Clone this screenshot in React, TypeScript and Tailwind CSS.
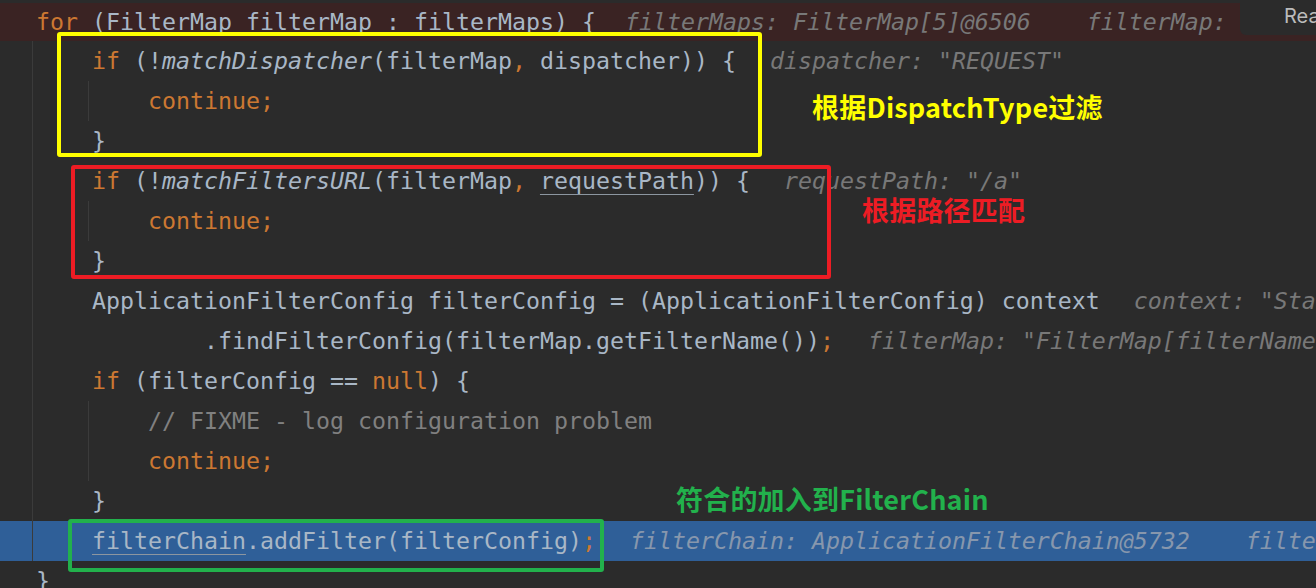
import React from "react";

// ─── Token helpers ───────────────────────────────────────────────────────────
const K = ({ children }: { children: React.ReactNode }) => (
  <span className="text-[#cc7832]">{children}</span>
);
const It = ({ children }: { children: React.ReactNode }) => (
  <span className="italic">{children}</span>
);
const U = ({ children }: { children: React.ReactNode }) => (
  <span className="underline decoration-[#8c96a0] decoration-1 underline-offset-[5px]">{children}</span>
);
const Hint = ({ children, gap = "ml-[34px]", blue = false }: { children: React.ReactNode; gap?: string; blue?: boolean }) => (
  <span className={`italic ${gap} ${blue ? "text-[#8797ad]" : "text-[#787878]"}`}>{children}</span>
);

// ─── One editor row: gutter, two indent guides, code ─────────────────────────
function Row({
  bg = "",
  inner = false,
  pad = "pl-[3px]",
  children,
}: {
  bg?: string;
  inner?: boolean;
  pad?: string;
  children: React.ReactNode;
}) {
  return (
    <div className={`flex h-[40px] items-center ${bg}`}>
      <div className="w-[32px] shrink-0" />
      <div className="w-px self-stretch shrink-0 bg-[#3b3b3b]" />
      <div className="w-[55px] shrink-0" />
      <div className={`w-px self-stretch shrink-0 ${inner ? "bg-[#3b3b3b]" : ""}`} />
      <div className={`whitespace-pre shrink-0 ${pad}`}>{children}</div>
    </div>
  );
}

const note = "absolute text-[27px] font-bold leading-none whitespace-nowrap tracking-[0.2px] font-['Noto_Sans_CJK_SC','Noto_Sans',sans-serif]";

export default function App() {
  return (
    <div className="relative w-[1316px] h-[588px] overflow-hidden bg-[#2b2b2b] pt-[1px] text-[#a9b7c6] text-[23.25px] font-['DejaVu_Sans_Mono','Liberation_Mono',monospace]">
      {/* breakpoint line */}
      <div className="flex h-[40px] items-center border-t-2 border-[#2b2b2b] bg-[#3a2323] pl-[36px] whitespace-pre">
        <K>for</K> (FilterMap filterMap : filterMaps) {"{"}
        <Hint gap="ml-[29px]">filterMaps: FilterMap[5]@6506    filterMap: </Hint>
      </div>

      <Row>
        <K>if</K> (!<It>matchDispatcher</It>(filterMap<K>,</K> dispatcher)) {"{"}
        <Hint>dispatcher: "REQUEST"</Hint>
      </Row>
      <Row inner pad="pl-[59px]">
        <K>continue;</K>
      </Row>
      <Row>{"}"}</Row>

      <Row>
        <K>if</K> (!<It>matchFiltersURL</It>(filterMap<K>,</K> <U>requestPath</U>)) {"{"}
        <Hint>requestPath: "/a"</Hint>
      </Row>
      <Row inner pad="pl-[59px]">
        <K>continue;</K>
      </Row>
      <Row>{"}"}</Row>

      <Row>
        ApplicationFilterConfig filterConfig = (ApplicationFilterConfig) context
        <Hint>context: "StandardContext[]"</Hint>
      </Row>
      <Row pad="pl-[115px]">
        .findFilterConfig(filterMap.getFilterName())<K>;</K>
        <Hint>filterMap: "FilterMap[filterName=a]"</Hint>
      </Row>
      <Row>
        <K>if</K> (filterConfig == <K>null</K>) {"{"}
      </Row>
      <Row inner pad="pl-[59px]">
        <span className="text-[#808080]">// FIXME - log configuration problem</span>
      </Row>
      <Row inner pad="pl-[59px]">
        <K>continue;</K>
      </Row>
      <Row>{"}"}</Row>

      {/* execution point */}
      <Row bg="bg-[#2f5f98]">
        <U>filterChain</U>.addFilter(filterConfig)<K>;</K>
        <Hint blue>filterChain: ApplicationFilterChain@5732    filterConfig: </Hint>
      </Row>

      <div className="flex h-[40px] items-center pl-[36px]">{"}"}</div>

      {/* Reader mode pill */}
      <div className="absolute top-0 left-[1240px] w-[76px] h-[35px] rounded-bl-[6px] bg-[#2b2b2b] pl-[44px] pt-[4px] overflow-hidden whitespace-nowrap text-[20px] leading-[24px] text-[#bbbbbb] font-['Inter','Noto_Sans',sans-serif]">
        Reader Mode
      </div>

      {/* annotations */}
      <div className="absolute left-[57px] top-[32px] w-[705px] h-[125px] border-4 border-[#ffff00] rounded-[3px]" />
      <div className="absolute left-[71px] top-[165px] w-[760px] h-[114px] border-4 border-[#ed1c24] rounded-[3px]" />
      <div className="absolute left-[68px] top-[519px] w-[536px] h-[53px] border-4 border-[#22b14c] rounded-[3px]" />

      <div className={`${note} left-[812px] top-[93px] text-[#ffff00]`}>根据DispatchType过滤</div>
      <div className={`${note} left-[862px] top-[196px] text-[#ed1c24]`}>根据路径匹配</div>
      <div className={`${note} left-[676px] top-[485px] text-[#22b14c]`}>符合的加入到FilterChain</div>
    </div>
  );
}
